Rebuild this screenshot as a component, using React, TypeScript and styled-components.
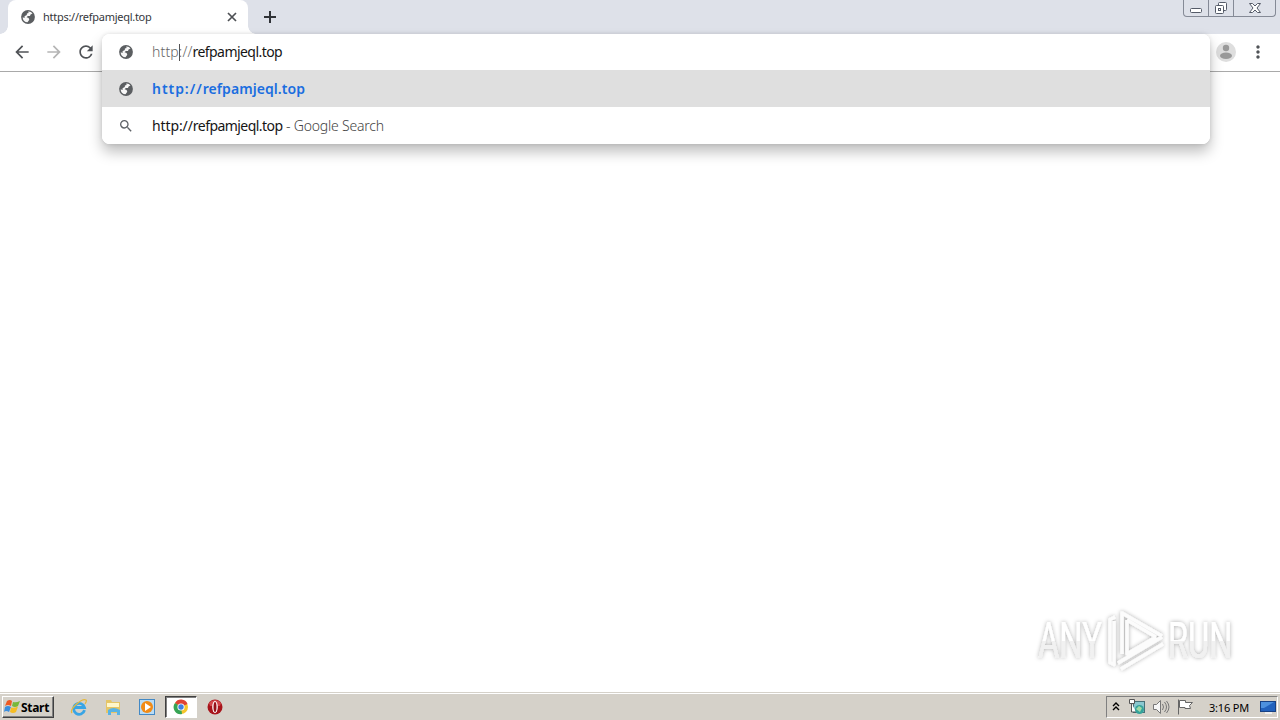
import React from "react";
import styled, { createGlobalStyle, css } from "styled-components";
import { MdSearch, MdArrowBack, MdArrowForward, MdRefresh, MdMoreVert } from "react-icons/md";

const Global = createGlobalStyle`
  * { box-sizing: border-box; }
  body { margin: 0; background: #fff; font-family: "Noto Sans", Tahoma, sans-serif; overflow: hidden; }
  svg { display: block; flex: none; }
`;
const Screen = styled.div`
  width: 1280px; height: 720px; display: flex; flex-direction: column; position: relative; background: #fff;
`;
const TabStrip = styled.header`
  height: 34px; background: #dee1e9; display: flex; align-items: flex-start; padding-left: 8px;
`;
const Tab = styled.div`
  width: 240px; height: 34px; background: #fff; border-radius: 8px 8px 0 0; display: flex; align-items: center;
  padding: 0 9px 0 12px; color: #55585c; position: relative;
  &::before, &::after {
    content: ""; position: absolute; bottom: 0; width: 8px; height: 8px;
  }
  &::before { left: -8px; background: radial-gradient(circle at 0 0, transparent 7.5px, #fff 8px); }
  &::after { right: -8px; background: radial-gradient(circle at 100% 0, transparent 7.5px, #fff 8px); }
`;
const TabTitle = styled.span`
  flex: 1; margin-left: 7px; font-size: 11px; line-height: 16px; color: #35373b; white-space: nowrap; letter-spacing: -0.27px;
`;
const NewTab = styled.div`
  margin: 9px 0 0 14px;
`;
const WindowButtons = styled.div`
  margin-left: auto; margin-right: 4px; height: 17px; width: 93px; display: flex;
  border: 1px solid #858a96; border-top: 0; border-radius: 0 0 4px 4px;
`;
const WindowButton = styled.div<{ $w: number }>`
  width: ${p => p.$w}px; display: flex; justify-content: center;
  & + & { border-left: 1px solid #858a96; }
`;
const Toolbar = styled.nav`
  height: 38px; background: #fff; border-bottom: 1px solid #a9a9a9; display: flex; align-items: center;
  padding: 0 12px 1px; color: #505357; gap: 12px;
`;
const ToolIcon = styled.span<{ $off?: boolean }>`
  color: ${p => (p.$off ? "#b5b5b5" : "#505357")};
`;
const Avatar = styled.div`
  margin-left: auto; width: 20px; height: 20px;
`;
const Page = styled.main`
  flex: 1; position: relative; background: #fff;
`;
const Omnibox = styled.section`
  position: absolute; left: 102px; top: 34px; width: 1108px; height: 110px; background: #fff;
  border-radius: 8px; overflow: hidden;
`;
const OmniShadow = styled.div`
  position: absolute; left: 102px; top: 34px; width: 1108px; height: 110px; border-radius: 8px;
  box-shadow: 0 8px 14px rgba(0,0,0,.25), 0 0 4px rgba(0,0,0,.12);
`;
const Row = styled.div<{ $h: number; $active?: boolean }>`
  height: ${p => p.$h}px; display: flex; align-items: center; padding-left: 16px; color: #5f6368;
  background: ${p => (p.$active ? "#dfdfdf" : "#fff")};
`;
const Text = styled.span<{ $tone?: "match" }>`
  margin-left: 18px; font-size: 14px; line-height: 20px; white-space: pre; color: #151515; font-weight: 400; letter-spacing: -0.55px;
  ${p => p.$tone === "match" && css`color: #1a6ee0; font-weight: 600; letter-spacing: 0.06px;`}
`;
const Scheme = styled.span<{ $spacing: number; $faint?: boolean }>`
  letter-spacing: ${p => p.$spacing}px;
  ${p => p.$faint && css`color: #666; font-weight: 300;`}
`;
const Hint = styled.span`color: #444; font-weight: 300; letter-spacing: -0.2px;`;
const Caret = styled.span`
  display: inline-block; width: 1px; height: 17px; margin-right: -1px; background: #555; vertical-align: -4px;
`;
const Watermark = styled.div`
  position: absolute; right: 30px; bottom: 12px;
`;
const Taskbar = styled.footer`
  height: 28px; background: #d5d1c9; border-top: 1px solid #d5d1c9; box-shadow: inset 0 1px #fff;
  display: flex; align-items: center; padding: 1px 2px 0 2px;
`;
const Start = styled.div`
  width: 52px; height: 22px; display: flex; align-items: center; padding-left: 1px;
  border: 1px solid; border-color: #fff #404040 #404040 #fff; box-shadow: inset -1px -1px #808080;
  font-size: 12px; font-weight: 700; color: #000; letter-spacing: -0.3px;
`;
const Launchers = styled.div`
  display: flex; margin-left: 9px; gap: 2px;
`;
const Launcher = styled.div<{ $active?: boolean }>`
  width: 32px; height: 22px; display: flex; align-items: center; justify-content: center;
  ${p => p.$active && css`background: #fff; border: 1px solid; border-color: #404040 #fff #fff #404040; box-shadow: inset 1px 1px #808080;`}
`;
const Tray = styled.div`
  margin-left: auto; width: 172px; height: 22px; border: 1px solid; border-color: #808080 #fff #fff #808080;
  display: flex; align-items: center; padding-left: 5px;
`;
const TrayIcon = styled.span<{ $gap: number }>`
  margin-left: ${p => p.$gap}px;
`;
const Clock = styled.span`
  font-size: 11px; color: #000; margin-left: 15px; width: 41px; white-space: nowrap; letter-spacing: -0.2px;
`;

const Globe = () => (
  <svg width="16" height="16">
    <circle cx="8" cy="8" r="6.900" fill="#5b5e61" />
    <path d="M8.200 2.600Q11.300 2.500 12.500 4.600L10.600 5.400 10 7H7.800L6.600 8.300 8.600 9.100 9.300 10.700 7.500 13.300Q3.300 13 2.600 8.400L4.800 8.800 4.500 7.200 6.800 6 6.900 4.600 8.600 4z" fill="#f7f7f7" />
  </svg>
);

export default function App() {
  return (
    <Screen>
      <Global />
      <TabStrip>
        <Tab>
          <Globe />
          <TabTitle>https://refpamjeql.top</TabTitle>
          <svg width="14" height="14" stroke="#4d5054" strokeWidth="1.700"><path d="M3 3l8 8M11 3l-8 8" /></svg>
        </Tab>
        <NewTab><svg width="16" height="16" stroke="#303338" strokeWidth="2"><path d="M8 2v12M2 8h12" /></svg></NewTab>
        <WindowButtons>
          <WindowButton $w={24}>
            <svg width="14" height="16"><rect x="1.500" y="8.500" width="11" height="4" rx="1" fill="#fff" stroke="#555b68" /></svg>
          </WindowButton>
          <WindowButton $w={25}>
            <svg width="14" height="16" fill="#fff" stroke="#555b68"><rect x="4.500" y="2.500" width="8" height="8" rx="1" /><rect x="1.500" y="5.500" width="8" height="8" rx="1" /><rect x="4.500" y="8.500" width="2" height="2" /></svg>
          </WindowButton>
          <WindowButton $w={42}>
            <svg width="14" height="16"><path d="M1.500 3.500h3L7 6l2.500-2.500h3L9 8l3.500 4.500h-3L7 10l-2.500 2.500h-3L5 8z" fill="#fff" stroke="#555b68" /></svg>
          </WindowButton>
        </WindowButtons>
      </TabStrip>
      <Toolbar>
        <ToolIcon><MdArrowBack size={20} /></ToolIcon>
        <ToolIcon $off><MdArrowForward size={20} /></ToolIcon>
        <ToolIcon><MdRefresh size={20} /></ToolIcon>
        <Avatar>
          <svg width="20" height="20"><circle cx="10" cy="10" r="10" fill="#dedede" /><circle cx="10" cy="6" r="3.200" fill="#999" /><ellipse cx="10" cy="13.800" rx="6" ry="3.200" fill="#999" /></svg>
        </Avatar>
        <MdMoreVert size={20} />
      </Toolbar>
      <Page>
        <Watermark>
          <svg width="230" height="80" viewBox="1020 600 230 80">
            <defs>
              <filter id="glow" x="-10%" y="-20%" width="120%" height="140%"><feDropShadow dx="0" dy="0" stdDeviation="2" floodColor="#000" floodOpacity=".34" /></filter>
              <linearGradient id="fade" x1="0" y1="0" x2="0" y2="1"><stop offset=".5" stopColor="#fff" /><stop offset=".5" stopColor="#f1f1f1" /></linearGradient>
            </defs>
            <g filter="url(#glow)" fill="url(#fade)" fontFamily="Roboto, sans-serif" fontSize="49" fontWeight="400">
              <text transform="translate(1038 658) scale(.68 1)" textLength="94" lengthAdjust="spacingAndGlyphs">ANY</text>
              <text transform="translate(1168 658) scale(.68 1)" textLength="95" lengthAdjust="spacingAndGlyphs">RUN</text>
            </g>
            <g filter="url(#glow)" fill="none" stroke="#fcfcfc" strokeWidth="3.500" strokeLinejoin="round">
              <path d="M1115 617l-5 2.500v43l4 2V621M1122 654V613l40 23M1127 620l29 17M1127 620v34l29-17M1118 663l44-26M1121 669l42-25" />
            </g>
          </svg>
        </Watermark>
      </Page>
      <OmniShadow />
      <Omnibox>
        <Row $h={36}><Globe /><Text><Scheme $spacing={0.15} $faint>http<Caret />://</Scheme>refpamjeql.top</Text></Row>
        <Row $h={37} $active><Globe /><Text $tone="match"><Scheme $spacing={0.95}>http://</Scheme>refpamjeql.top</Text></Row>
        <Row $h={37}><MdSearch size={16} /><Text><Scheme $spacing={-0.1}>http://</Scheme>refpamjeql.top<Hint> - Google Search</Hint></Text></Row>
      </Omnibox>
      <Taskbar>
        <Start>
          <svg width="17" height="16"><path d="M3 2q3-2 5 0L7 7Q4 5 1 7z" fill="#ee5a24" /><path d="M9 3q3 1 7-1l-2 5q-3 2-6 0z" fill="#78b83a" /><path d="M1 8q3-2 6 0l-2 5q-3-2-5 0z" fill="#3b8ede" /><path d="M7 8.500q3 1 7-1l-2 5.500q-3 2-6 0z" fill="#f6bd24" /></svg>
          Start
        </Start>
        <Launchers>
          <Launcher>
            <svg width="18" height="18" fill="none"><path d="M14.500 12.200A5.500 5.500 0 1 1 14.500 9.500H5" stroke="#38a5e5" strokeWidth="2.800" /><path d="M2 15C-1 11 12 0 16 2q1 1-1 4" stroke="#e5b83d" strokeWidth="1.300" /></svg>
          </Launcher>
          <Launcher>
            <svg width="18" height="18"><path d="M2 2h5l1 2h8v11H2z" fill="#e5c566" /><path d="M3 5h12v4H3z" fill="#fff6c9" /><path d="M4 17v-5q5-4 12 0v5h-3v-3H7v3z" fill="#57b3e5" /></svg>
          </Launcher>
          <Launcher>
            <svg width="18" height="18"><rect x="1.500" y="1.500" width="15" height="15" fill="#b9dcf5" stroke="#4389c5" /><circle cx="9" cy="9" r="6" fill="#f18b16" /><path d="M7 5l6 4-6 4z" fill="#fff" /></svg>
          </Launcher>
          <Launcher $active>
            <svg width="16" height="16"><circle cx="8" cy="8" r="7" fill="#f5c52c" /><path d="M8 8L2 4a7 7 0 0 1 12.500 1z" fill="#df4335" /><path d="M8 8l1 7A7 7 0 0 1 2 4z" fill="#36a456" /><circle cx="8" cy="8" r="3.600" fill="#fff" /><circle cx="8" cy="8" r="2.700" fill="#3e7fe2" /></svg>
          </Launcher>
          <Launcher>
            <svg width="16" height="16"><circle cx="8" cy="8" r="7.500" fill="#a8141b" /><path d="M2 4q6-6 12 0l-1 3H3z" fill="#d4474b" /><ellipse cx="8" cy="8" rx="2.800" ry="6" fill="#fff" /><ellipse cx="8" cy="8" rx="1.500" ry="5" fill="#971118" /></svg>
          </Launcher>
        </Launchers>
        <Tray>
          <svg width="8" height="12" fill="none" stroke="#000" strokeWidth="1.400"><path d="M1 5l3-3 3 3M1 9l3-3 3 3" /></svg>
          <TrayIcon $gap={8}>
            <svg width="18" height="18"><rect x="5.500" y="3.500" width="11" height="11" fill="#8ac8d0" stroke="#477078" /><path d="M1.500 1.500h5v4h-5zM3.500 5v9H8" fill="#fff" stroke="#555" /><circle cx="11.500" cy="11.500" r="4.500" fill="#35a39a" /><path d="M8 11l3-3 3 2-2 4" fill="#a1d9a6" /></svg>
          </TrayIcon>
          <TrayIcon $gap={6}>
            <svg width="18" height="18" fill="#f6f6f6" stroke="#777"><path d="M1.500 6.500h3l4-4v13l-4-4h-3z" /><path d="M10.500 6q2 3 0 6M12.500 4q4 5 0 10M14.500 3q5 6 0 12" fill="none" /></svg>
          </TrayIcon>
          <TrayIcon $gap={6}>
            <svg width="18" height="18" fill="#fff" stroke="#666"><path d="M2.500 1.500v15M3.500 2.500h6v2h7l-3 3 1 3H9v-1H3.500z" /></svg>
          </TrayIcon>
          <Clock>3:16 PM</Clock>
          <TrayIcon $gap={10}>
            <svg width="16" height="16"><rect x=".5" y="2.500" width="15" height="10" fill="#2262bd" stroke="#174184" /><path d="M1 3h13L4 9H1z" fill="#4d91de" /><path d="M5 14h7" stroke="#eee" strokeWidth="2" /></svg>
          </TrayIcon>
        </Tray>
      </Taskbar>
    </Screen>
  );
}
